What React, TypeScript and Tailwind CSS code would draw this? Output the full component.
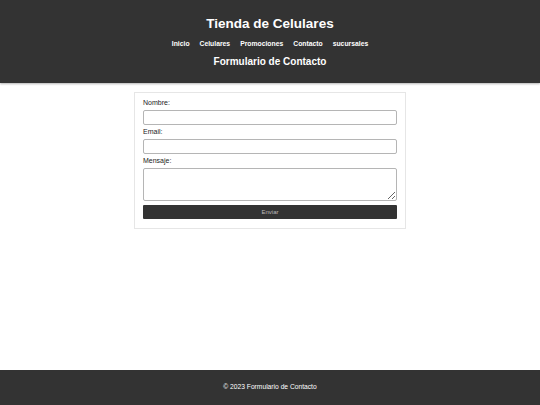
export default function App() {
  const links = ["Inicio", "Celulares", "Promociones", "Contacto", "sucursales"];
  return (
    <div
      className="min-h-screen flex flex-col bg-white text-[#222]"
      style={{ fontFamily: '"Liberation Sans", Arial, sans-serif' }}
    >
      <header className="bg-[#333] text-white text-center h-[83px] pt-[15px] shadow-[0_1px_2px_rgba(0,0,0,0.3)]">
        <h1 className="text-[13.5px] font-bold leading-[17px]">Tienda de Celulares</h1>
        <nav className="flex justify-center gap-[10px] mt-[7px] text-[6.8px] font-bold leading-[9px]">
          {links.map((l) => (
            <a key={l} href="#" className="text-white">
              {l}
            </a>
          ))}
        </nav>
        <h2 className="text-[10px] font-bold leading-[12px] mt-[8px]">Formulario de Contacto</h2>
      </header>

      <main className="flex-1 pt-[9px]">
        <form className="w-[272px] mx-auto border border-[#e6e6e6] px-[8px] pt-[6px] pb-[9px] text-[7px]">
          <label className="block leading-[8px] mb-[3px]">Nombre:</label>
          <input className="block w-full h-[15px] border border-[#b5b5b5] rounded-[2px] mb-[3px]" />
          <label className="block leading-[8px] mb-[3px]">Email:</label>
          <input className="block w-full h-[15px] border border-[#b5b5b5] rounded-[2px] mb-[3px]" />
          <label className="block leading-[8px] mb-[3px]">Mensaje:</label>
          <textarea className="block w-full h-[33px] border border-[#b5b5b5] rounded-[2px] mb-[4px] resize-y" />
          <button
            type="button"
            className="block w-full h-[14px] bg-[#333] text-[#bbb] text-[6px] rounded-[1px]"
          >
            Enviar
          </button>
        </form>
      </main>

      <footer className="bg-[#333] text-white text-center h-[35px] flex items-center justify-center text-[6.7px]">
        © 2023 Formulario de Contacto
      </footer>
    </div>
  );
}
